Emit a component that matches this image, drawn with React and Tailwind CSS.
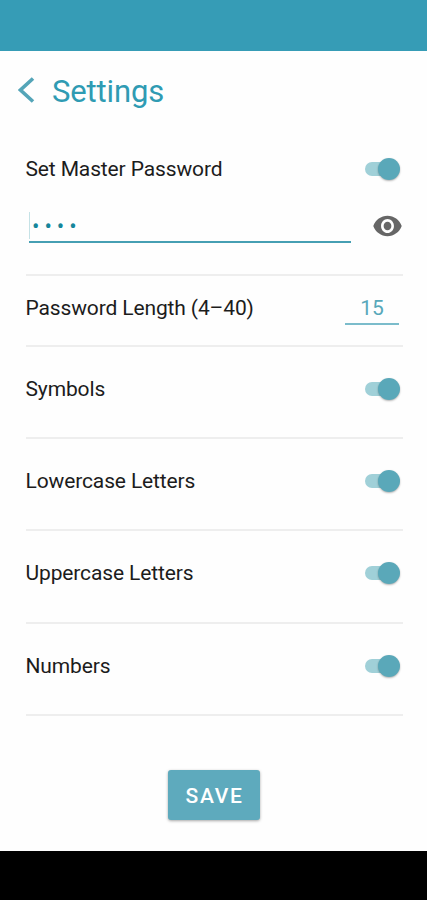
import React, { useState } from "react";

const Toggle = ({ checked, onChange, label }) => (
  <button
    type="button"
    role="switch"
    aria-checked={checked}
    aria-label={label}
    onClick={() => onChange(!checked)}
    className="grid h-[22px] w-[35px] items-center"
  >
    <span
      className={`col-start-1 row-start-1 h-[14px] w-[34px] rounded-full ${checked ? "bg-[#a0d0d8]" : "bg-gray-300"}`}
    />
    <span
      className={`col-start-1 row-start-1 size-[22px] rounded-full shadow-[0_1px_2px_rgba(0,0,0,0.3)] ${
        checked ? "justify-self-end bg-[#5aa8b9]" : "justify-self-start bg-gray-100"
      }`}
    />
  </button>
);

const ToggleRow = ({ label, className, checked, onChange }) => (
  <div className={`flex items-center justify-between border-b-2 border-[#eeeeee] pr-[3px] pb-[7px] ${className}`}>
    <span className="mt-[2px]">{label}</span>
    <Toggle checked={checked} onChange={onChange} label={label} />
  </div>
);

const App = () => {
  const [useMaster, setUseMaster] = useState(true);
  const [password, setPassword] = useState("1234");
  const [showPassword, setShowPassword] = useState(false);
  const [length, setLength] = useState("15");
  const [symbols, setSymbols] = useState(true);
  const [lowercase, setLowercase] = useState(true);
  const [uppercase, setUppercase] = useState(true);
  const [numbers, setNumbers] = useState(true);

  return (
    <div className="flex h-[900px] w-[427px] flex-col bg-[#fefefe] font-['Roboto',sans-serif] text-[21px] tracking-[-0.13px] text-[#1c1c1c]">
      <div className="h-[51px] shrink-0 bg-[#369cb6]" />

      <header className="flex h-[79px] shrink-0 items-center pl-[18px] text-[#2f9bb3]">
        <button type="button" aria-label="Back" className="-mt-[2px]">
          <svg width="17" height="28" viewBox="0 0 17 28" fill="none" stroke="#54a5b8" strokeWidth="3.6">
            <path d="M15 2.5 2.5 14 15 25.5" />
          </svg>
        </button>
        <h1 className="mt-[1px] ml-[17px] text-[31px] leading-none">Settings</h1>
      </header>

      <main className="flex grow flex-col pr-[24px] pl-[25.5px]">
        <section className="h-[146px] border-b-2 border-[#eeeeee]">
          <div className="flex h-[78px] items-center justify-between pr-[3px]">
            <span className="mt-[1px]">Set Master Password</span>
            <Toggle checked={useMaster} onChange={setUseMaster} label="Set Master Password" />
          </div>
          <div className="flex items-start justify-between pt-[4px]">
            <div className="ml-[3.5px] h-[31px] w-[322px] border-b-2 border-[#469fb3]">
              <input
                type={showPassword ? "text" : "password"}
                value={password}
                onChange={(e) => setPassword(e.target.value)}
                aria-label="Master password"
                className="block h-[27px] w-full border-l border-[#c5e2e6] pt-[2px] pl-[2px] text-[22px] text-[#16869b] tracking-[5px] outline-none"
              />
            </div>
            <button
              type="button"
              aria-label="Show password"
              onClick={() => setShowPassword(!showPassword)}
              className="-mt-[3px]"
            >
              <svg width="31" height="34" viewBox="0 0 24 24" preserveAspectRatio="none" fill="#666666">
                <path d="M12 4.8C7 4.8 2.73 7.73 1 12c1.73 4.27 6 7.2 11 7.2s9.27-2.93 11-7.2c-1.73-4.27-6-7.2-11-7.2zM12 17c-2.76 0-5-2.24-5-5s2.24-5 5-5 5 2.24 5 5-2.24 5-5 5zm0-8c-1.66 0-3 1.34-3 3s1.34 3 3 3 3-1.34 3-3-1.34-3-3-3z" />
              </svg>
            </button>
          </div>
        </section>

        <div className="flex h-[71px] items-center justify-between border-b-2 border-[#eeeeee] pr-1 pb-[5px]">
          <span className="mt-[2px]">Password Length (4–40)</span>
          <input
            type="text"
            value={length}
            onChange={(e) => setLength(e.target.value)}
            aria-label="Password length"
            className="h-[33px] w-[54px] border-b-2 border-[#7bbccb] pt-[2px] text-center text-[#58a8ba] outline-none"
          />
        </div>

        <ToggleRow label="Symbols" className="h-[92px]" checked={symbols} onChange={setSymbols} />
        <ToggleRow label="Lowercase Letters" className="h-[92px]" checked={lowercase} onChange={setLowercase} />
        <ToggleRow label="Uppercase Letters" className="h-[93px]" checked={uppercase} onChange={setUppercase} />
        <ToggleRow label="Numbers" className="h-[92px]" checked={numbers} onChange={setNumbers} />

        <button
          type="button"
          className="mt-[54px] mr-[1.5px] h-[50px] w-[92px] self-center rounded-[3px] bg-[#5eaabd] pt-[3px] pl-[2px] font-medium tracking-[1.7px] text-white shadow-[0_1px_3px_rgba(0,0,0,0.35)]"
        >
          SAVE
        </button>
      </main>

      <div className="h-[49px] shrink-0 bg-black" />
    </div>
  );
};

export default App;
